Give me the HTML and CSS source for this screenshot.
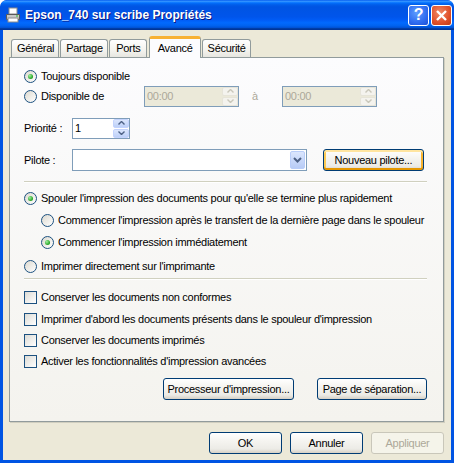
FILE: index.html
```html
<!DOCTYPE html>
<html lang="fr">
<head>
  <meta charset="UTF-8" />
  <title>Epson_740 sur scribe Propriétés</title>
  <link rel="stylesheet" href="styles.css">
</head>
<body>
  <div class="window">
    <div class="titlebar">
      <svg class="app-icon" width="16" height="16" viewBox="0 0 16 16">
        <rect x="4" y="1" width="8" height="6" fill="#fff" stroke="#8a8a8a" />
        <path d="M1.5 7.5h13v5h-13z" fill="#c8c8c8" stroke="#5a5a5a" />
        <rect x="3" y="11" width="10" height="4" fill="#fff" stroke="#8a8a8a" />
        <rect x="11" y="8.5" width="2" height="1" fill="#2fbf2f" />
      </svg>
      <span class="title">Epson_740 sur scribe Propriétés</span>
      <div class="caption-btns">
        <span class="cap-btn help">?</span>
        <span class="cap-btn close">
          <svg width="13" height="13" viewBox="0 0 13 13">
            <path d="M2 2l9 9M11 2l-9 9" stroke="#fff" stroke-width="2.4" />
          </svg>
        </span>
      </div>
    </div>

    <div class="client">
      <div class="tabs">
        <span class="tab">Général</span>
        <span class="tab">Partage</span>
        <span class="tab">Ports</span>
        <span class="tab active">Avancé</span>
        <span class="tab">Sécurité</span>
      </div>

      <div class="panel">
        <div class="row r-first">
          <span class="radio checked"></span>
          <span>Toujours disponible</span>
        </div>

        <div class="row r-time">
          <div class="field-label wide">
            <span class="radio"></span>
            <span>Disponible de</span>
          </div>
          <div class="spinbox disabled time">
            <span class="spin-text">00:00</span>
            <span class="spin-btns">
              <span class="spin-up"><svg width="7" height="4" viewBox="0 0 7 4"><path d="M0.5 3.5l3-3 3 3" /></svg></span>
              <span class="spin-down"><svg width="7" height="4" viewBox="0 0 7 4"><path d="M0.5 0.5l3 3 3-3" /></svg></span>
            </span>
          </div>
          <span class="to-label">à</span>
          <div class="spinbox disabled time">
            <span class="spin-text">00:00</span>
            <span class="spin-btns">
              <span class="spin-up"><svg width="7" height="4" viewBox="0 0 7 4"><path d="M0.5 3.5l3-3 3 3" /></svg></span>
              <span class="spin-down"><svg width="7" height="4" viewBox="0 0 7 4"><path d="M0.5 0.5l3 3 3-3" /></svg></span>
            </span>
          </div>
        </div>

        <div class="row r-box">
          <span class="field-label">Priorité :</span>
          <div class="spinbox prio">
            <span class="spin-text">1</span>
            <span class="spin-btns">
              <span class="spin-up"><svg width="7" height="4" viewBox="0 0 7 4"><path d="M0.5 3.5l3-3 3 3" /></svg></span>
              <span class="spin-down"><svg width="7" height="4" viewBox="0 0 7 4"><path d="M0.5 0.5l3 3 3-3" /></svg></span>
            </span>
          </div>
        </div>

        <div class="row r-box">
          <span class="field-label">Pilote :</span>
          <div class="combo">
            <span class="combo-text"></span>
            <span class="combo-btn">
              <svg width="9" height="6" viewBox="0 0 9 6"><path d="M1 1l3.5 3.5 3.5-3.5" /></svg>
            </span>
          </div>
          <button class="btn default">Nouveau pilote...</button>
        </div>

        <div class="separator sep-1"></div>

        <div class="row r-spool">
          <span class="radio checked"></span>
          <span>Spouler l'impression des documents pour qu'elle se termine plus rapidement</span>
        </div>
        <div class="row r-sub indent">
          <span class="radio"></span>
          <span>Commencer l'impression après le transfert de la dernière page dans le spouleur</span>
        </div>
        <div class="row r-sub indent">
          <span class="radio checked"></span>
          <span>Commencer l'impression immédiatement</span>
        </div>
        <div class="row r-direct">
          <span class="radio"></span>
          <span>Imprimer directement sur l'imprimante</span>
        </div>

        <div class="separator sep-2"></div>

        <div class="row r-check first">
          <span class="check"></span>
          <span>Conserver les documents non conformes</span>
        </div>
        <div class="row r-check">
          <span class="check"></span>
          <span>Imprimer d'abord les documents présents dans le spouleur d'impression</span>
        </div>
        <div class="row r-check tight">
          <span class="check"></span>
          <span>Conserver les documents imprimés</span>
        </div>
        <div class="row r-check tight">
          <span class="check"></span>
          <span>Activer les fonctionnalités d'impression avancées</span>
        </div>

        <div class="row r-actions">
          <button class="btn processor">Processeur d'impression...</button>
          <button class="btn separator-page">Page de séparation...</button>
        </div>
      </div>

      <div class="footer">
        <button class="btn dlg">OK</button>
        <button class="btn dlg">Annuler</button>
        <button class="btn dlg" disabled>Appliquer</button>
      </div>
    </div>
  </div>
</body>
</html>
```

FILE: styles.css
```css
body {
  margin: 0;
  background: #ffffff;
  font-family: "Liberation Sans", Arial, sans-serif;
  font-size: 11px;
  letter-spacing: -0.28px;
  color: #000;
}

.window {
  width: 454px;
  height: 463px;
  box-sizing: border-box;
  display: flex;
  flex-direction: column;
  background: #0054e3;
  border-radius: 7px 7px 0 0;
  padding: 0 3px 3px;
  overflow: hidden;
}

/* title bar */
.titlebar {
  height: 30px;
  margin: 0 -3px;
  padding: 0 5px;
  display: flex;
  align-items: center;
  border-radius: 7px 7px 0 0;
  background: linear-gradient(to bottom, #0058ee 0%, #3593ff 4%, #288eff 6%, #127dff 8%, #036ffc 10%, #0262ee 14%, #0057e5 20%, #0054e3 24%, #0055eb 56%, #005bf5 66%, #026afe 76%, #0062ef 86%, #0052d6 92%, #0040ab 94%, #003092 100%);
}

.app-icon {
  flex: none;
  margin-top: -1px;
}

.title {
  margin-left: 4px;
  color: #fff;
  font-weight: bold;
  font-size: 12px;
  letter-spacing: 0;
  text-shadow: 1px 1px 0 #0a1883;
}

.caption-btns {
  margin-left: auto;
  display: flex;
  gap: 2px;
  margin-right: -3px;
}

.cap-btn {
  width: 21px;
  height: 21px;
  box-sizing: border-box;
  border: 1px solid #fff;
  border-radius: 3px;
  display: flex;
  align-items: center;
  justify-content: center;
  color: #fff;
}

.cap-btn.help {
  background: radial-gradient(circle at 40% 35%, #5f9dff 0%, #2f6cf0 60%, #1d4fd6 100%);
  font-weight: bold;
  font-size: 16px;
}

.cap-btn.close {
  background: radial-gradient(circle at 40% 35%, #f08a68 0%, #e0502a 60%, #c13a14 100%);
}

/* client area */
.client {
  flex: 1;
  background: #ece9d8;
  padding: 6px 7px 0 6px;
  display: flex;
  flex-direction: column;
}

.tabs {
  display: flex;
  align-items: flex-end;
  height: 21px;
  padding-left: 2px;
  gap: 1px;
}

.tab {
  min-width: 38px;
  height: 18px;
  box-sizing: border-box;
  padding: 2px 4px 0 5px;
  text-align: center;
  border: 1px solid #919b9c;
  border-bottom: none;
  border-radius: 3px 3px 0 0;
  background: linear-gradient(#fefefe, #f4f3ee 60%, #e7e6e0);
}

.tab.active {
  position: relative;
  z-index: 1;
  height: 22px;
  margin: 0 0 -1px 1px;
  padding: 3px 7px 0 8px;
  background: #fcfcfe;
  border-top: 3px solid #f7b133;
}

.panel {
  width: 435px;
  height: 365px;
  box-sizing: border-box;
  border: 1px solid #919b9c;
  box-shadow: 1px 1px 0 #d0cebf;
  background: linear-gradient(#fcfcfe, #f4f3ee);
  padding: 0 16px 0 14px;
}

.row {
  display: flex;
  align-items: center;
  white-space: nowrap;
}

.r-first { margin-top: 10px; height: 16px; }
.r-time { margin-top: 1px; height: 22px; }
.r-box { margin-top: 10px; height: 22px; }
.r-spool { margin-top: 7px; height: 16px; }
.r-sub { margin-top: 6px; height: 16px; }
.r-direct { margin-top: 8px; height: 16px; }
.r-check { margin-top: 6px; height: 16px; }
.r-check.first { margin-top: 9px; }
.r-check.tight { margin-top: 5px; }
.r-actions { margin-top: 9px; height: 22px; }

.indent {
  padding-left: 17px;
}

.separator {
  height: 1px;
  background: #d0d0bf;
  border-bottom: 1px solid #fff;
}

.sep-1 { margin-top: 10px; }
.sep-2 { margin-top: 4px; }

/* radio and checkbox */
.radio {
  flex: none;
  width: 13px;
  height: 13px;
  box-sizing: border-box;
  border: 1px solid #1c5180;
  border-radius: 50%;
  margin-right: 4px;
  background: linear-gradient(135deg, #dcd9cf, #fff);
  display: flex;
  align-items: center;
  justify-content: center;
}

.radio.checked::after {
  content: "";
  width: 5px;
  height: 5px;
  border-radius: 50%;
  background: radial-gradient(circle at 35% 35%, #9fef9f, #21a121 70%);
}

.check {
  flex: none;
  width: 13px;
  height: 13px;
  box-sizing: border-box;
  border: 1px solid #1c5180;
  margin-right: 4px;
  background: linear-gradient(135deg, #dcdbd5, #fff);
}

.field-label {
  width: 48px;
  display: flex;
  align-items: center;
}

.field-label.wide {
  width: 120px;
}

/* spin boxes */
.spinbox {
  height: 21px;
  box-sizing: border-box;
  border: 1px solid #7f9db9;
  background: #fff;
  display: flex;
  align-items: center;
}

.spinbox.time { width: 95px; }
.spinbox.prio { width: 58px; }

.spinbox.disabled {
  background: #ebe9d9;
  color: #aca899;
}

.spin-text {
  flex: 1;
  padding-left: 2px;
}

.spin-btns {
  width: 16px;
  height: 19px;
  display: flex;
  flex-direction: column;
  gap: 1px;
}

.spin-up,
.spin-down {
  flex: 1;
  display: flex;
  align-items: center;
  justify-content: center;
  border-radius: 2px;
  background: linear-gradient(#dbe6fd, #bdd0f8);
  border: 1px solid #c3d3fd;
}

.spin-btns svg path {
  fill: none;
  stroke: #4d6185;
  stroke-width: 1.4;
}

.disabled .spin-up,
.disabled .spin-down {
  background: #f4f3ee;
  border-color: #e6e4d9;
}

.disabled .spin-btns svg path {
  stroke: #c9c7ba;
}

.to-label {
  width: 30px;
  margin-left: 13px;
  color: #aca899;
}

/* combo */
.combo {
  width: 235px;
  height: 22px;
  box-sizing: border-box;
  border: 1px solid #7f9db9;
  background: #fff;
  display: flex;
  justify-content: flex-end;
  padding: 1px;
}

.combo-btn {
  width: 15px;
  box-sizing: border-box;
  border: 1px solid #b9cdf9;
  border-radius: 2px;
  background: linear-gradient(#dbe6fd, #b7cbf6);
  display: flex;
  align-items: center;
  justify-content: center;
}

.combo-btn path {
  fill: none;
  stroke: #4d6185;
  stroke-width: 2;
}

/* buttons */
.btn {
  font-family: inherit;
  font-size: 11px;
  letter-spacing: inherit;
  height: 22px;
  box-sizing: border-box;
  border: 1px solid #003c74;
  border-radius: 3px;
  background: linear-gradient(#fff, #f5f4f0 40%, #ecebe6 80%, #d6d0c5);
  color: #000;
  padding: 0;
}

.btn.default {
  margin-left: 16px;
  width: 101px;
  box-shadow: inset 0 2px 0 #ffe5a0, inset 0 -2px 0 #e59700, inset 2px 0 0 #fbca55, inset -2px 0 0 #f8b330;
}

.btn.processor {
  margin-left: 139px;
  width: 131px;
}

.btn.separator-page {
  margin-left: 23px;
  width: 110px;
}

.btn:disabled {
  border-color: #c9c7ba;
  background: #f5f4ea;
  color: #aca899;
}

.footer {
  margin-top: 10px;
  display: flex;
  justify-content: flex-end;
  gap: 8px;
}

.btn.dlg {
  width: 73px;
}
```
